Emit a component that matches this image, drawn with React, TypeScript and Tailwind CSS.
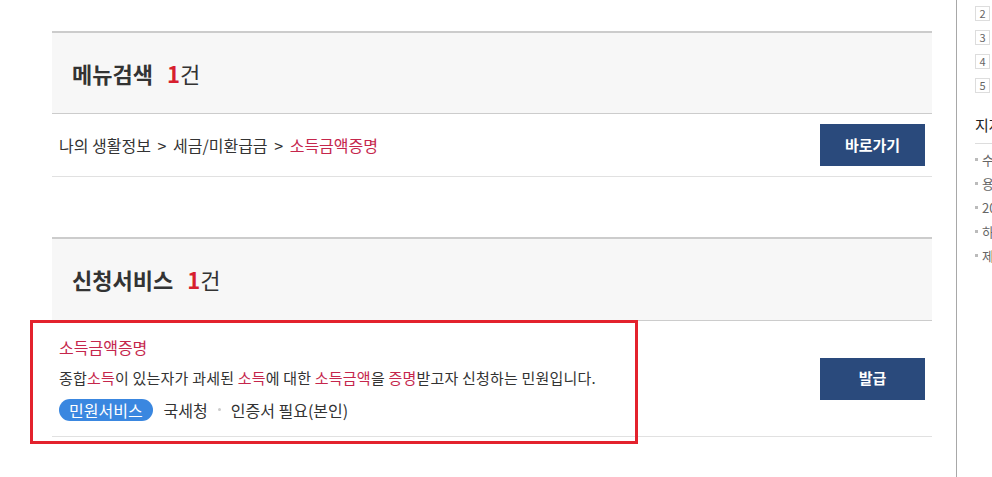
export default function App() {
  const font = { fontFamily: '"Noto Sans CJK KR", "Noto Sans", sans-serif' }
  return (
    <div
      className="relative flex h-[477px] w-[992px] overflow-hidden bg-white text-[#333]"
      style={font}
    >
      <main className="ml-[52px] w-[880px] shrink-0">
        <section className="mt-[31px]">
          <div className="flex h-[83px] items-center border-t-2 border-b border-[#cccccc] bg-[#f7f7f7] pl-5">
            <h2 className="text-[22px] font-bold text-[#333]">
              메뉴검색<span className="ml-[14px] text-[#d71f2f]">1</span>
              <span className="font-normal">건</span>
            </h2>
          </div>
          <div className="flex h-[63px] items-center justify-between border-b border-[#e1e1e1] pl-[7px] pr-[7px]">
            <p className="text-[16px] text-[#333]">
              나의 생활정보 <span className="mx-[3px]">&gt;</span> 세금/미환급금{' '}
              <span className="mx-[3px]">&gt;</span> <span className="text-[#c5264c]">소득금액증명</span>
            </p>
            <button className="h-[42px] w-[105px] bg-[#2a4a7c] text-[15px] font-bold text-white">
              바로가기
            </button>
          </div>
        </section>

        <section className="mt-[60px]">
          <div className="flex h-[84px] items-center border-t-2 border-b border-[#cccccc] bg-[#f7f7f7] pl-5">
            <h2 className="text-[22px] font-bold text-[#333]">
              신청서비스<span className="ml-[14px] text-[#d71f2f]">1</span>
              <span className="font-normal">건</span>
            </h2>
          </div>
          <div className="flex h-[116px] items-center justify-between border-b border-[#e1e1e1] pl-[7px] pr-[7px]">
            <div className="flex flex-col gap-[8px]">
              <p className="text-[16px] text-[#c5264c]">소득금액증명</p>
              <p className="text-[15px] tracking-[0.2px] text-[#333]">
                종합<span className="text-[#c5264c]">소득</span>이 있는자가 과세된{' '}
                <span className="text-[#c5264c]">소득</span>에 대한{' '}
                <span className="text-[#c5264c]">소득금액</span>을{' '}
                <span className="text-[#c5264c]">증명</span>받고자 신청하는 민원입니다.
              </p>
              <div className="flex items-center text-[16px] text-[#333]">
                <span className="flex h-[22px] items-center rounded-full bg-[#3a87e0] px-[10px] text-white">
                  민원서비스
                </span>
                <span className="ml-[11px]">국세청</span>
                <span className="mx-[10px] h-[3px] w-[3px] rounded-full bg-[#cccccc]" />
                <span>인증서 필요(본인)</span>
              </div>
            </div>
            <button className="h-[42px] w-[105px] bg-[#2a4a7c] text-[15px] font-bold text-white">
              발급
            </button>
          </div>
        </section>
      </main>

      <aside className="ml-[24px] h-full w-[200px] shrink-0 border-l border-[#a8a8a8] pl-[18px]">
        <ul className="mt-[6px] flex flex-col gap-[9px]">
          {['2', '3', '4', '5'].map((n) => (
            <li key={n} className="flex items-center">
              <span className="flex h-[15px] w-[15px] items-center justify-center border border-[#dddddd] text-[11px] leading-none text-[#666]">
                {n}
              </span>
            </li>
          ))}
        </ul>
        <h3 className="mt-[21px] text-[15px] text-[#222]">지자체 소식</h3>
        <div className="mt-[6px] border-t border-[#dddddd]" />
        <ul className="mt-[7px] flex flex-col gap-[6px] text-[13px] text-[#666]">
          {['수도요금 감면', '용도지역 안내', '2024 지방세', '하수도 사용료', '제증명 발급'].map((t) => (
            <li key={t} className="flex h-[18px] items-center">
              <span className="mr-[4px] h-[3px] w-[3px] bg-[#bbbbbb]" />
              {t}
            </li>
          ))}
        </ul>
      </aside>

      <div className="pointer-events-none absolute left-[30px] top-[320px] h-[124px] w-[608px] border-[3px] border-[#e3222d]" />
    </div>
  )
}
